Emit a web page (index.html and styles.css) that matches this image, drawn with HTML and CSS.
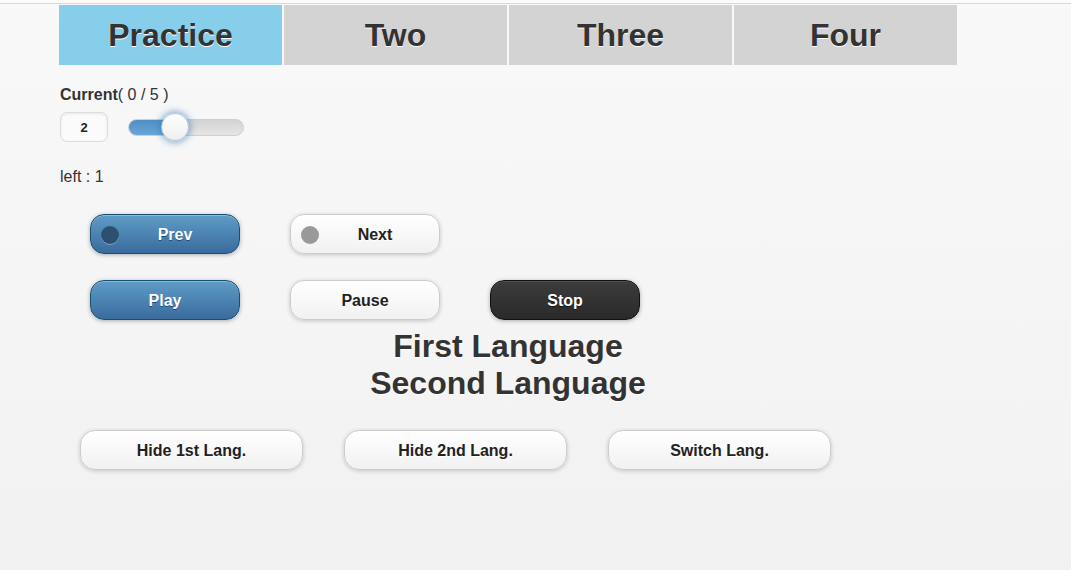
FILE: index.html
```html
<!DOCTYPE html>
<html>
<head>
<meta charset="utf-8">
<title>Practice</title>
<link rel="stylesheet" href="styles.css">
</head>
<body>
<div class="topline"></div>
<div class="page">
  <nav class="tabs">
    <a class="tab active">Practice</a>
    <a class="tab">Two</a>
    <a class="tab">Three</a>
    <a class="tab">Four</a>
  </nav>

  <div class="current"><b>Current</b>( 0 / 5 )</div>
  <div class="slider-row">
    <div class="num-input">2</div>
    <div class="track">
      <div class="fill" style="width: 40%"></div>
      <div class="handle" style="left: 40%"></div>
    </div>
  </div>

  <div class="left">left : 1</div>

  <div class="btn-row">
    <button class="btn btn-blue has-icon"><span class="icon icon-dark"></span>Prev</button>
    <button class="btn btn-white has-icon"><span class="icon icon-gray"></span>Next</button>
  </div>
  <div class="btn-row row2">
    <button class="btn btn-blue">Play</button>
    <button class="btn btn-white">Pause</button>
    <button class="btn btn-black">Stop</button>
  </div>

  <div class="langs">
    <div>First Language</div>
    <div>Second Language</div>
  </div>

  <div class="lang-row">
    <button class="btn btn-white wide">Hide 1st Lang.</button>
    <button class="btn btn-white wide">Hide 2nd Lang.</button>
    <button class="btn btn-white wide">Switch Lang.</button>
  </div>
</div>
</body>
</html>
```

FILE: styles.css
```css
html, body {
  margin: 0;
  padding: 0;
}
body {
  min-height: 570px;
  font-family: "Liberation Sans", Arial, sans-serif;
  color: #333;
  background: linear-gradient(#f9f9f9, #f1f1f1);
}
.topline {
  height: 3px;
  background: #fbfbfb;
  border-bottom: 1px solid #d9d9d9;
}
.page {
  width: 898px;
  margin-left: 59px;
  padding-top: 1px;
}
.tabs {
  display: flex;
  gap: 2px;
}
.tab {
  box-sizing: border-box;
  flex: 0 0 223px;
  height: 60px;
  padding-top: 1px;
  display: flex;
  align-items: center;
  justify-content: center;
  background: #d3d3d3;
  font-size: 32px;
  font-weight: bold;
  color: #333;
  text-shadow: 0 1px 0 #fff;
}
.tab.active {
  background: #87ceeb;
}
.current {
  margin-top: 20px;
  font-size: 16px;
  line-height: 20px;
  padding-left: 1px;
}
.slider-row {
  display: flex;
  align-items: center;
  gap: 20px;
  margin-top: 7px;
  padding-left: 1px;
}
.num-input {
  box-sizing: border-box;
  width: 48px;
  height: 30px;
  border: 1px solid #dcdcdc;
  border-radius: 7px;
  background: #fbfbfb;
  box-shadow: inset 0 1px 3px rgba(0,0,0,0.08);
  display: flex;
  align-items: center;
  justify-content: center;
  font-size: 13px;
  font-weight: bold;
  color: #222;
}
.track {
  position: relative;
  box-sizing: border-box;
  width: 116px;
  height: 17px;
  border: 1px solid #cfcfcf;
  border-radius: 9px;
  background: linear-gradient(#d2d2d2, #e6e6e6);
}
.fill {
  height: 100%;
  border-radius: 8px 0 0 8px;
  background: linear-gradient(#4e8fc4, #6aa6d6);
}
.handle {
  position: absolute;
  top: 50%;
  width: 28px;
  height: 28px;
  margin: -14px 0 0 -14px;
  box-sizing: border-box;
  border-radius: 50%;
  border: 1px solid #b4c6d8;
  background: linear-gradient(#ffffff, #efefef);
  box-shadow: 0 0 6px 2px rgba(56, 123, 190, 0.55);
}
.left {
  margin-top: 25px;
  font-size: 16px;
  line-height: 20px;
  padding-left: 1px;
}
.btn-row {
  display: flex;
  gap: 50px;
  margin-top: 27px;
  padding-left: 31px;
}
.btn-row.row2 {
  margin-top: 26px;
}
.btn {
  position: relative;
  box-sizing: border-box;
  width: 150px;
  height: 40px;
  border-radius: 14px;
  font-family: "Liberation Sans", Arial, sans-serif;
  font-size: 16px;
  font-weight: bold;
  padding: 2px 20px 0;
  cursor: pointer;
}
.btn.has-icon {
  padding-left: 40px;
}
.btn-blue {
  border: 1px solid #145072;
  background: linear-gradient(#5f9cc5, #396b9e);
  color: #fff;
  text-shadow: 0 1px 0 #194b7e;
  box-shadow: 0 1px 4px rgba(0,0,0,0.3), inset 0 1px 0 rgba(255,255,255,0.3);
}
.btn-white {
  border: 1px solid #cccccc;
  background: linear-gradient(#ffffff, #f1f1f1);
  color: #222;
  text-shadow: 0 1px 0 #fff;
  box-shadow: 0 1px 4px rgba(0,0,0,0.2);
}
.btn-black {
  border: 1px solid #111;
  background: linear-gradient(#3c3c3c, #2a2a2a);
  color: #fff;
  text-shadow: 0 1px 1px #111;
  box-shadow: 0 1px 4px rgba(0,0,0,0.3), inset 0 1px 0 rgba(255,255,255,0.1);
}
.icon {
  position: absolute;
  left: 10px;
  top: 50%;
  width: 18px;
  height: 18px;
  margin-top: -8px;
  border-radius: 50%;
}
.icon-dark {
  background: #2d5070;
  box-shadow: 0 1px 0 rgba(255,255,255,0.3);
}
.icon-gray {
  background: #999;
}
.langs {
  margin-top: 8px;
  text-align: center;
  font-size: 32px;
  font-weight: bold;
  line-height: 37px;
  color: #333;
  text-shadow: 0 1px 0 #fff;
}
.lang-row {
  display: flex;
  gap: 41px;
  margin-top: 28px;
  padding-left: 21px;
}
.btn.wide {
  width: 223px;
  border-radius: 15px;
}
```
